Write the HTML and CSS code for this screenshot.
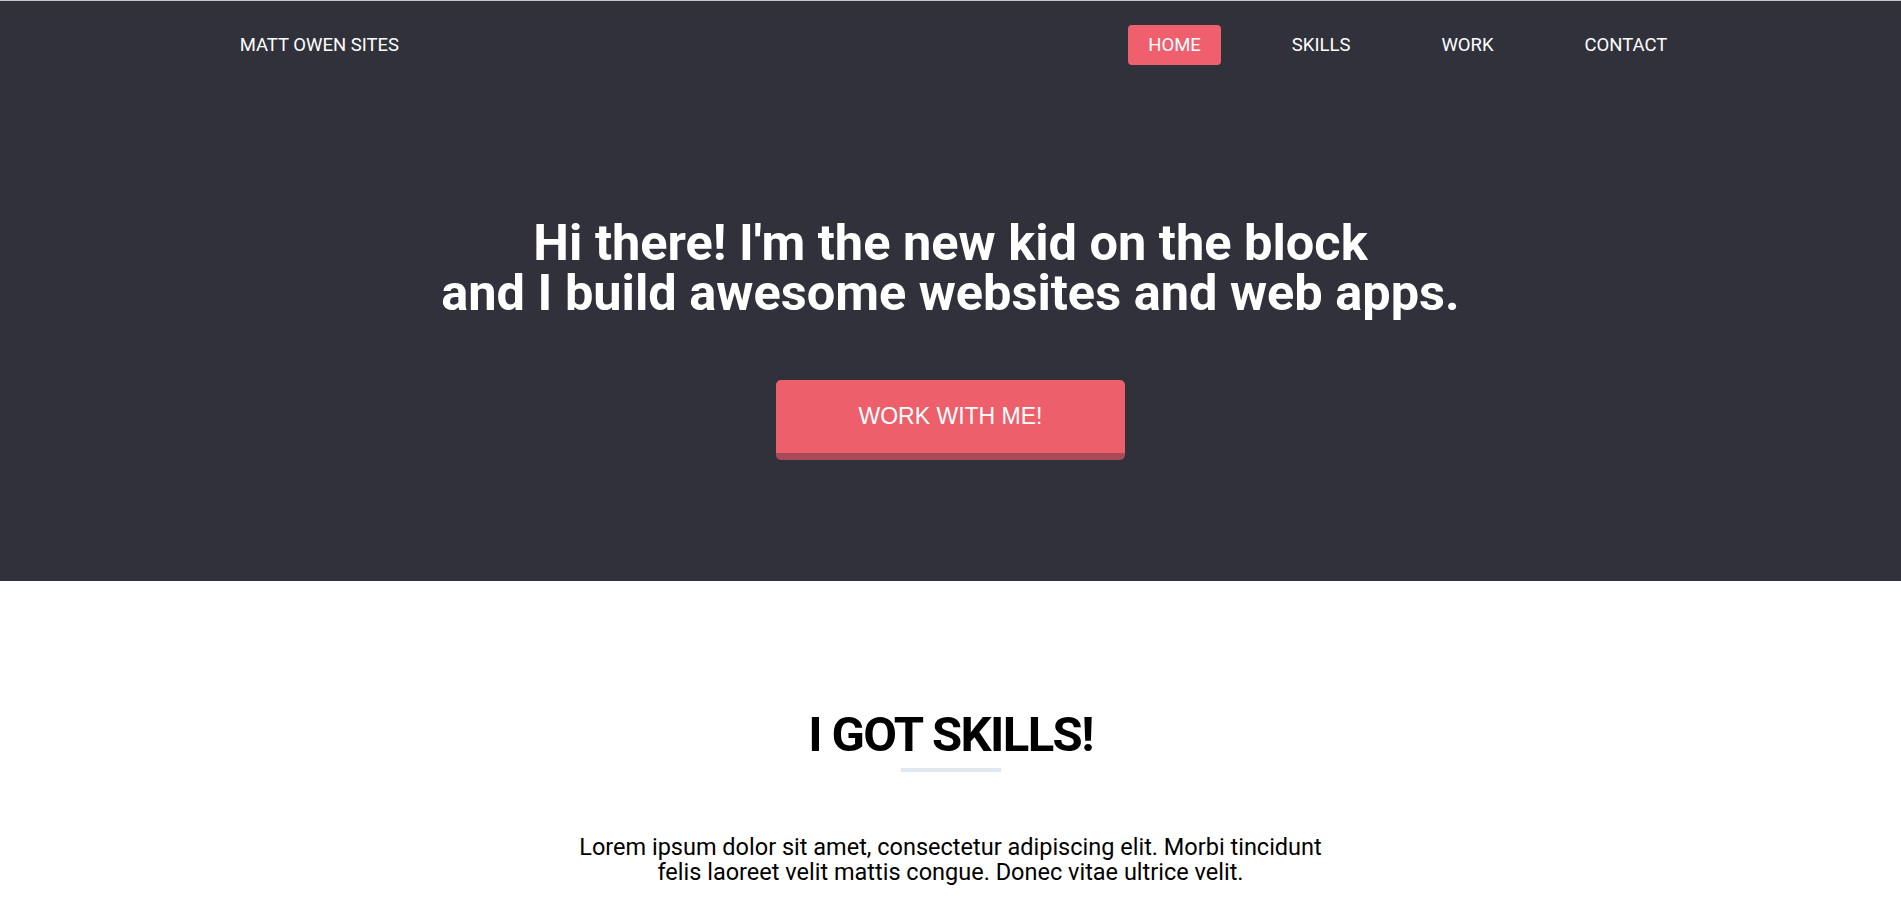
FILE: index.html
```html
<!DOCTYPE html>
<html lang="en">
<head>
<meta charset="utf-8">
<title>Matt Owen Sites</title>
<link rel="stylesheet" href="styles.css">
</head>
<body>
<section class="hero">
  <header class="container header">
    <a class="logo" href="#">MATT OWEN SITES</a>
    <nav>
      <ul class="nav">
        <li><a class="nav-link active" href="#">HOME</a></li>
        <li><a class="nav-link" href="#">SKILLS</a></li>
        <li><a class="nav-link" href="#">WORK</a></li>
        <li><a class="nav-link" href="#">CONTACT</a></li>
      </ul>
    </nav>
  </header>
  <div class="hero-body">
    <h1 class="hero-title"><span class="hero-line">Hi there! I'm the new kid on the block</span><span class="hero-line">and I build awesome websites and web apps.</span></h1>
    <a class="cta" href="#">WORK WITH ME!</a>
  </div>
</section>
<section class="skills">
  <h2 class="section-title">I GOT SKILLS!</h2>
  <div class="title-bar"></div>
  <p class="section-text">Lorem ipsum dolor sit amet, consectetur adipiscing elit. Morbi tincidunt felis laoreet velit mattis congue. Donec vitae ultrice velit.</p>
</section>
</body>
</html>
```
FILE: styles.css
```css
html {
  overflow-y: scroll;
}
html::-webkit-scrollbar {
  width: 2px;
}
html::-webkit-scrollbar-track {
  background: linear-gradient(to bottom, #f1f1f1 calc(100% - 19px), #c9c9c9 0);
}
html::-webkit-scrollbar-thumb {
  background: transparent;
}
body {
  margin: 0;
  border-top: 1px solid #c6c6c6;
  font-family: Roboto, "Liberation Sans", sans-serif;
  color: #000;
  background: #fff;
}
a {
  text-decoration: none;
  color: inherit;
}
.hero {
  background: #31313b;
  color: #fff;
  padding: 24px 0 121px;
}
.container {
  width: 75%;
  margin: 0 auto;
}
.header {
  display: flex;
  justify-content: space-between;
  align-items: center;
}
.logo {
  font-size: 18.5px;
  line-height: 40px;
  margin-left: 2px;
}
.nav {
  display: flex;
  gap: 51px;
  list-style: none;
  margin: 0 -24px 0 0;
  padding: 0;
}
.nav-link {
  display: block;
  font-size: 18.5px;
  line-height: 40px;
  padding: 0 20px;
  border-radius: 4px;
}
.nav-link.active {
  background: #ef5f6d;
}
.hero-body {
  display: flex;
  flex-direction: column;
  align-items: center;
  text-align: center;
}
.hero-title {
  margin: 153px 0 0;
  font-size: 50.5px;
  line-height: 50px;
  font-weight: 700;
}
.hero-line {
  display: block;
  height: 50px;
}
.cta {
  margin-top: 62px;
  width: 349px;
  box-sizing: border-box;
  height: 80px;
  line-height: 73px;
  background: #ec5f6b;
  border-bottom: 7px solid #a84b56;
  border-radius: 5px;
  font-family: "Liberation Sans", Arial, sans-serif;
  font-size: 23px;
  color: #fff;
}
.skills {
  display: flex;
  flex-direction: column;
  align-items: center;
  padding: 124px 0 100px;
  text-align: center;
}
.section-title {
  margin: 0;
  font-size: 49px;
  line-height: 59px;
  font-weight: 700;
  letter-spacing: -1.6px;
}
.title-bar {
  width: 100px;
  height: 4px;
  margin-top: 4px;
  background: #e0e7ee;
}
.section-text {
  margin: 63px 0 0;
  max-width: 760px;
  font-size: 23.5px;
  line-height: 25px;
}
```
